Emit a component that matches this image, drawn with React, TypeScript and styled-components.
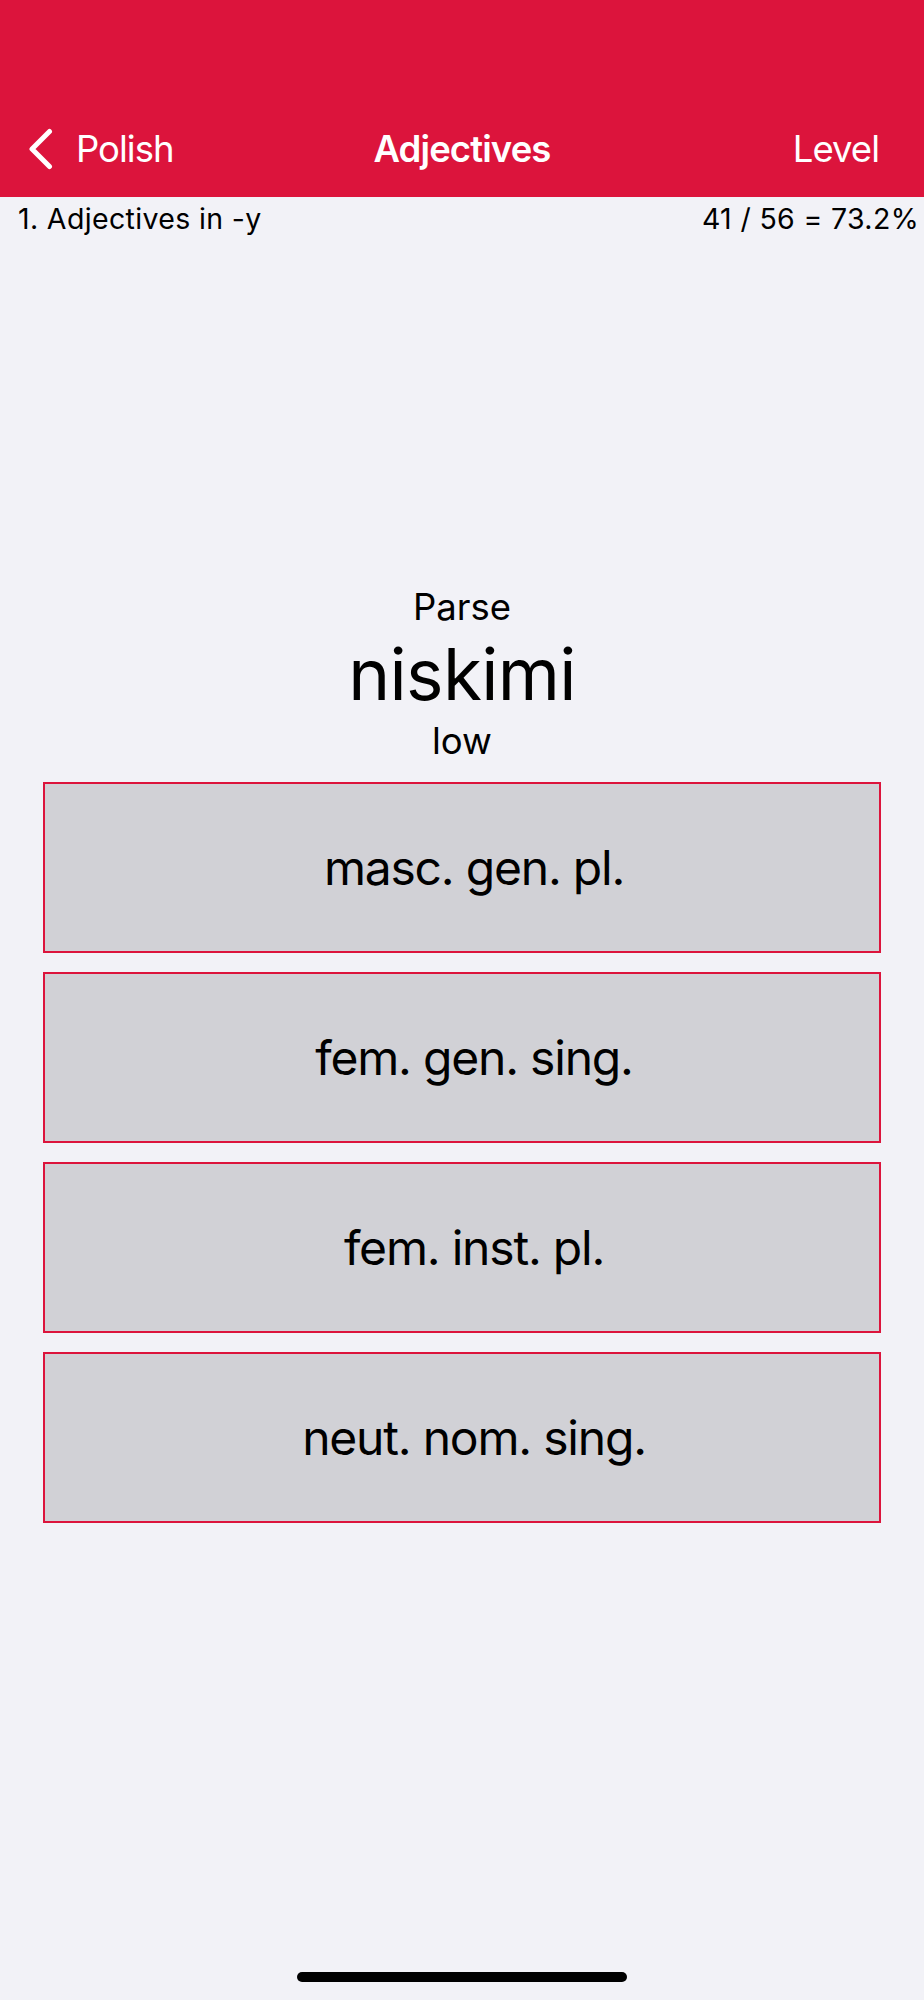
import { createGlobalStyle } from "styled-components";
import styled from "styled-components";

const GlobalStyle = createGlobalStyle`
  html, body {
    margin: 0;
    padding: 0;
    background: #f2f2f7;
  }
  body {
    font-family: Inter, "Noto Sans", "Liberation Sans", sans-serif;
    color: #000;
    -webkit-font-smoothing: antialiased;
  }
`;

const CRIMSON = "#dc143c";

const Screen = styled.div`
  width: 924px;
  min-height: 2000px;
  display: flex;
  flex-direction: column;
  background: #f2f2f7;
`;

const Header = styled.header`
  background: ${CRIMSON};
  padding-top: 101px;
`;

const NavBar = styled.nav`
  height: 96px;
  display: grid;
  grid-template-columns: 1fr auto 1fr;
  align-items: center;
  padding: 0 28px;
  color: #fff;
  font-size: 36.5px;
  letter-spacing: -1px;
`;

const BackButton = styled.div`
  display: flex;
  align-items: center;
  gap: 22px;
  justify-self: start;
`;

const Title = styled.div`
  font-weight: 600;
  letter-spacing: -0.9px;
`;

const NavAction = styled.div`
  justify-self: end;
  padding-right: 17px;
`;

const StatsRow = styled.div`
  display: flex;
  justify-content: space-between;
  padding: 5px 5px 0 18px;
  font-size: 28.5px;
  line-height: 34px;
  letter-spacing: 0.35px;
`;

const Quiz = styled.main`
  display: flex;
  flex-direction: column;
  align-items: center;
  padding: 349px 43px 0 43px;
`;

const Prompt = styled.div`
  font-size: 36.5px;
  line-height: 44px;
`;

const Word = styled.div`
  font-size: 71px;
  line-height: 90px;
  letter-spacing: -0.7px;
`;

const Gloss = styled.div`
  font-size: 36.5px;
  line-height: 44px;
  margin-bottom: 19px;
`;

const Choices = styled.div`
  align-self: stretch;
  display: flex;
  flex-direction: column;
  gap: 19px;
`;

const Choice = styled.button`
  height: 171px;
  box-sizing: border-box;
  border: 2px solid ${CRIMSON};
  background: #d1d1d6;
  padding: 0 0 0 24px;
  margin: 0;
  font-family: inherit;
  font-size: 48px;
  letter-spacing: -1.2px;
  color: #000;
  display: flex;
  align-items: center;
  justify-content: center;
  cursor: pointer;
`;

const Footer = styled.div`
  margin-top: auto;
  display: flex;
  justify-content: center;
  padding-bottom: 18px;
`;

const HomeIndicator = styled.div`
  width: 330px;
  height: 10px;
  border-radius: 5px;
  background: #000;
`;

const Chevron = () => (
  <svg width="26" height="42" viewBox="0 0 26 42" fill="none">
    <path
      d="M21.5 3.5 L4 21 L21.5 38.5"
      stroke="#fff"
      strokeWidth="5"
      strokeLinecap="round"
      strokeLinejoin="round"
    />
  </svg>
);

const choices = [
  "masc. gen. pl.",
  "fem. gen. sing.",
  "fem. inst. pl.",
  "neut. nom. sing.",
];

export default function App() {
  return (
    <>
      <GlobalStyle />
      <Screen>
        <Header>
          <NavBar>
            <BackButton>
              <Chevron />
              <span>Polish</span>
            </BackButton>
            <Title>Adjectives</Title>
            <NavAction>Level</NavAction>
          </NavBar>
        </Header>
        <StatsRow>
          <span>1. Adjectives in -y</span>
          <span>41 / 56 = 73.2%</span>
        </StatsRow>
        <Quiz>
          <Prompt>Parse</Prompt>
          <Word>niskimi</Word>
          <Gloss>low</Gloss>
          <Choices>
            {choices.map((c) => (
              <Choice key={c}>{c}</Choice>
            ))}
          </Choices>
        </Quiz>
        <Footer>
          <HomeIndicator />
        </Footer>
      </Screen>
    </>
  );
}
